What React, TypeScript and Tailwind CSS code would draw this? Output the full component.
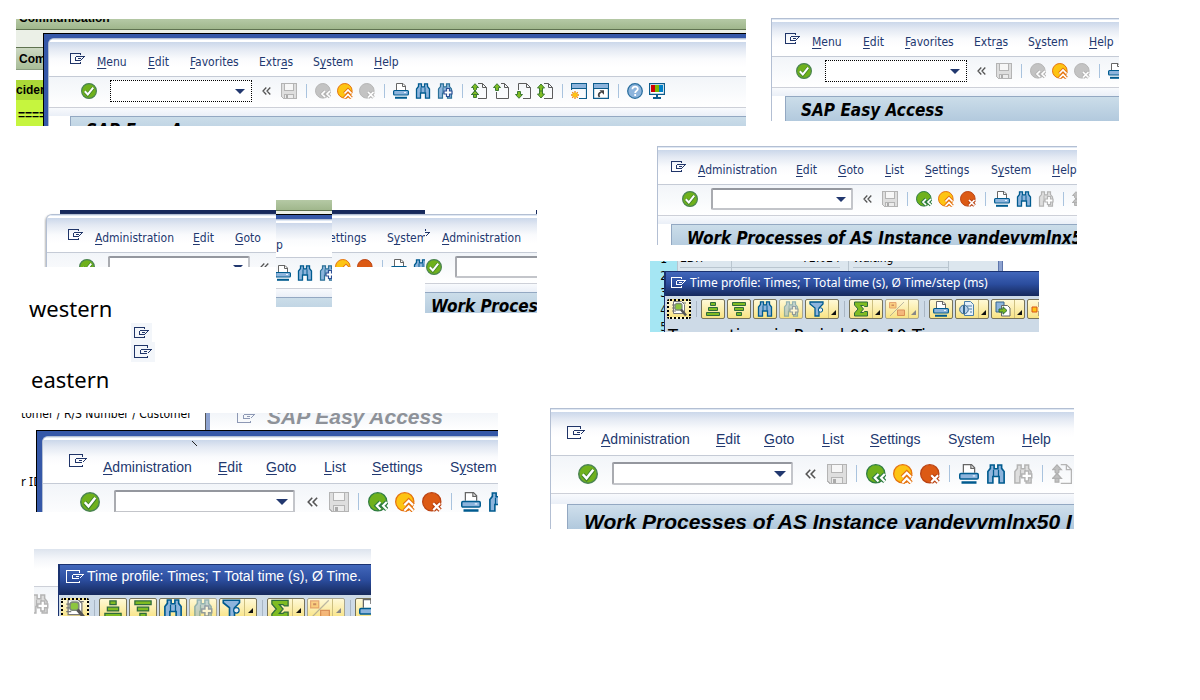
import React, { ReactNode } from "react";

type IconProps = { s?: number; off?: boolean };

const svgBase = (s: number) => ({ width: s, height: s, viewBox: "0 0 16 16", fill: "none", "aria-hidden": true });

function Hand({ big, color = "#1f3468" }: { big?: boolean; color?: string }) {
  return big ? (
    <svg className="shrink-0" width={18} height={14} viewBox="0 0 18 14" fill="none" stroke={color} aria-hidden shapeRendering="crispEdges">
      <path d="M13.500 2.500v-2H.5v12h13v-2M6.500 4.500h11M6.500 4.500v4h6M10 6.500h3M17 5l-3 3" />
    </svg>
  ) : (
    <svg className="shrink-0" width={15} height={11} viewBox="0 0 15 11" fill="none" stroke={color} aria-hidden shapeRendering="crispEdges">
      <path d="M10.500 2V.5H.5v10h10V9M5.500 3.500h9M5.500 3.500v4h5M8 5.500h3M14 4l-3 3" />
    </svg>
  );
}

const Check = ({ s = 16 }: IconProps) => (
  <svg {...svgBase(s)}>
    <circle cx="8" cy="8" r="7.400" fill="#6fb11c" stroke="#4a8451" strokeWidth="1.200" />
    <path d="M3.800 8.400l3 3.300 5.400-7" stroke="#3f7f2a" strokeWidth="3.400" />
    <path d="M3.800 8.200l3 3.200 5.400-6.800" stroke="#fff" strokeWidth="2" />
  </svg>
);

const Save = ({ s = 16 }: IconProps) => (
  <svg {...svgBase(s)} shapeRendering="crispEdges">
    <path d="M.5.5h15v15H2.500l-2-2z" fill="#dedede" stroke="#b4b4b4" />
    <path d="M3.500.5h9v6.500h-9z" fill="#f7f7f7" stroke="#b4b4b4" />
    <path d="M3.500 15.500v-4.500h9v4.500z" fill="#ececec" stroke="#b4b4b4" />
    <path d="M5 12h2v3H5z" fill="#aaa" />
  </svg>
);

function Round({ s, fill, edge, d }: { s: number; fill: string; edge: string; d: string }) {
  return (
    <svg {...svgBase(s)}>
      <circle cx="7.800" cy="7.800" r="7.300" fill={fill} stroke={edge} />
      <path d={d} stroke={edge} strokeWidth="3.600" />
      <path d={d} stroke="#fff" strokeWidth="1.700" />
    </svg>
  );
}
const Back = ({ s = 16, off }: IconProps) => (
  <Round s={s} fill={off ? "#c3c3c3" : "#6fb11c"} edge={off ? "#b5b5b5" : "#2f7d41"} d="M10 8L7 11l3 3M15 8l-3 3 3 3" />
);
const Exit = ({ s = 16 }: IconProps) => (
  <Round s={s} fill="#fdc413" edge="#e5730f" d="M7.500 10.500l3.500-3.500 3.500 3.500M7.500 15l3.500-3.500 3.500 3.500" />
);
const Cancel = ({ s = 16, off }: IconProps) => (
  <Round s={s} fill={off ? "#c3c3c3" : "#dc5a14"} edge={off ? "#b5b5b5" : "#bb4312"} d="M9 9l5.500 5.500M14.500 9l-5.500 5.500" />
);

const Print = ({ s = 16 }: IconProps) => (
  <svg {...svgBase(s)}>
    <path d="M3.500 7V.500h6.500l2.500 2.500v4" fill="#fff" stroke="#666" />
    <path d="M9.500.5v3h3" stroke="#666" />
    <rect x=".6" y="7.500" width="14.800" height="4.500" rx="1" fill="#8db4dc" stroke="#005b8f" strokeWidth="1.200" />
    <path d="M2 14.800h12" stroke="#005b8f" strokeWidth="2" />
    <path d="M11 9.500h2" stroke="#e9f3ff" />
  </svg>
);

const BINO = "M1.500 15.200V6l2-2.500V.8h3v3h3v-3h3v2.700l2 2.500v9.200h-4V10h-5v5.200z";
const Find = ({ s = 16 }: IconProps) => (
  <svg {...svgBase(s)}>
    <path d={BINO} fill="#8db4dc" stroke="#005b8f" strokeWidth="1.300" />
    <path d="M6 4.500v5M10 4.500v5" stroke="#005b8f" />
  </svg>
);
const FindNext = ({ s = 16, off }: IconProps) => (
  <svg {...svgBase(s)}>
    <path d={BINO} fill={off ? "#dedede" : "#8db4dc"} stroke={off ? "#b4b4b4" : "#2c7298"} strokeWidth="1.200" />
    <path d="M6 4.500v5M10 4.500v5" stroke={off ? "#b4b4b4" : "#2c7298"} />
    <path d="M9.500 5.500h3v2.500h2.500v3h-2.500v2.500h-3V11H7V8h2.500z" fill="#fff" stroke={off ? "#b4b4b4" : "#2c4f95"} strokeWidth="1.200" />
  </svg>
);

const UP = "M4 .7L7.500 4.500H5.500v3h-3v-3H.5z";
const DOWN = "M4 15.300L.5 11.500h2v-3h3v3h2z";
function Page({ s = 16, off, kind }: IconProps & { kind: "first" | "prev" | "next" | "last" }) {
  const g = off ? "#c0c0c0" : "#7fbc22";
  const e = off ? "#b0b0b0" : "#3c7a32";
  const line = off ? "#b4b4b4" : "#5c5c5c";
  return (
    <svg {...svgBase(s)}>
      {kind === "prev" && <path d="M8 .5h3.500l4 4v11h-12V9" stroke={line} />}
      {kind === "next" && <path d="M3.500 7V.5h8l4 4v11H8" stroke={line} />}
      {(kind === "first" || kind === "last") && <path d="M7 .5h4.500l4 4v11H7" stroke={line} />}
      <path d="M11.500.5v4h4" stroke={line} />
      {kind === "prev" && <path d={UP} fill={g} stroke={e} />}
      {kind === "next" && <path d={DOWN} fill={g} stroke={e} />}
      {kind === "first" && <path d="M4 .7L7.500 4.500H5.500V6.500L4 8 7.500 11.500H5.500v3h-3v-3H.5L4 8 2.500 6.500v-2H.5zM4 7.500l3.500 4H.5z" fill={g} stroke={e} />}
      {kind === "last" && <path d="M4 1L7.500 5h-2v6h2L4 15 .5 11h2V5h-2zM2 8h4" fill={g} stroke={e} />}
    </svg>
  );
}

const NewWin = () => (
  <svg {...svgBase(16)}>
    <path d="M.5 7V.5h15v15H8" stroke="#0d5c8c" strokeWidth="1.200" />
    <path d="M1 1h14v4H1z" fill="#8db4dc" />
    <path d="M1 5.500h14" stroke="#0d5c8c" />
    <path d="M4 8v8M0 12h8M1.200 9.200l5.600 5.600M6.800 9.200l-5.600 5.600" stroke="#ef8a10" strokeWidth="1.300" />
    <circle cx="4" cy="12" r="2.300" fill="#fdc413" />
  </svg>
);
const Shortcut = () => (
  <svg {...svgBase(16)}>
    <path d="M.6.6h14.800v14.800H.6z" fill="#fff" stroke="#0d5c8c" strokeWidth="1.200" />
    <path d="M1 1h14v4H1z" fill="#8db4dc" />
    <path d="M1 5.500h14" stroke="#0d5c8c" />
    <path d="M6.500 14c-1.500-2-1-4 2-5" stroke="#444" strokeWidth="1.800" />
    <path d="M6.500 7.200H11v4.500z" fill="#444" />
  </svg>
);
const Help = () => (
  <svg {...svgBase(16)}>
    <circle cx="8" cy="8" r="7.300" fill="#8db4dc" stroke="#2a6f9f" strokeWidth="1.300" />
    <path d="M5.400 6.200c0-3.600 5.400-3.300 5.400-.3 0 1.900-2.600 2-2.600 4M8.200 11v2" stroke="#fff" strokeWidth="1.800" />
  </svg>
);
const Monitor = () => (
  <svg {...svgBase(16)}>
    <path d="M.6.6h14.800v10.800H.6z" fill="#fff" stroke="#0d5c8c" strokeWidth="1.200" />
    <path d="M2 2h4v7H2z" fill="#d00000" />
    <path d="M6 2h4v7H6z" fill="#7ab800" />
    <path d="M10 2h4v7h-4z" fill="#0080c8" />
    <path d="M8 11.500v3M4 15h8" stroke="#0d5c8c" strokeWidth="2" />
  </svg>
);

/* Grid toolbar icons */
const Detail = ({ s = 16 }: IconProps) => (
  <svg {...svgBase(s)}>
    <path d="M2.500.5h8l3 3v9h-11z" fill="#fff" stroke="#777" />
    <path d="M1 4h4M1 7h3M1 10h4M12 2h3" stroke="#777" />
    <rect x="4" y="2.500" width="7" height="6.500" rx="2" fill="#8cc63f" stroke="#7d8a78" strokeWidth="1.300" />
    <path d="M10 8.500l5 6" stroke="#555" strokeWidth="2.600" />
  </svg>
);
const SortUp = ({ s = 16 }: IconProps) => (
  <svg {...svgBase(s)} fill="#7fbc22" stroke="#2f6b3c">
    <path d="M5.500 1.500h5v3h-5zM3.500 6.500h9v3h-9zM1.500 11.500h13v3h-13z" />
  </svg>
);
const SortDown = ({ s = 16 }: IconProps) => (
  <svg {...svgBase(s)} fill="#7fbc22" stroke="#2f6b3c">
    <path d="M1.500 1.500h13v3h-13zM3.500 6.500h9v3h-9zM5.500 11.500h5v3h-5z" />
  </svg>
);
const Filter = ({ s = 16 }: IconProps) => (
  <svg {...svgBase(s)}>
    <path d="M1 1h13v2l-4 4v8H6V7L1 3z" fill="#8db4dc" stroke="#005b8f" strokeWidth="1.300" />
    <circle cx="11.500" cy="9" r="2.200" fill="#e8eef5" stroke="#005b8f" />
  </svg>
);
const Sum = ({ s = 16 }: IconProps) => (
  <svg {...svgBase(s)}>
    <path d="M1.500 1h13v4.500h-3l-1-1H7.500l3 3.500-3 3.500h3l1-1h3V15h-13v-3L5 8 1.500 4z" fill="#7fbc22" stroke="#2f6b3c" />
  </svg>
);
const Sub = ({ s = 16 }: IconProps) => (
  <svg {...svgBase(s)} opacity=".55">
    <path d="M1 15L15 1" stroke="#888" />
    <path d="M.5 1.500h6.500v5.500H.5z" fill="#f7b04a" stroke="#d0662c" />
    <path d="M2.500 4.200h2.500M10.500 11.700h3" stroke="#a33a10" strokeWidth="1.500" />
    <path d="M8.500 9h7v5.500h-7z" fill="#ee8f5f" stroke="#c04a20" />
  </svg>
);
const Views = ({ s = 16 }: IconProps) => (
  <svg {...svgBase(s)}>
    <path d="M5.500.5h6l3 3v11h-9z" fill="#e6f0fa" stroke="#4b7fa8" />
    <path d="M8 5h5M10 8h3M11 11h2" stroke="#4b7fa8" />
    <circle cx="5" cy="8.500" r="4.300" fill="#b8d2ec" stroke="#34658e" />
    <path d="M5 4.500v8" stroke="#34658e" strokeWidth="2" />
  </svg>
);
const Export = ({ s = 16 }: IconProps) => (
  <svg {...svgBase(s)}>
    <path d="M1 1h8v10H1z" fill="#8db4dc" stroke="#34658e" />
    <path d="M6.500 4.500h6l2.500 2.500v8H6.500z" fill="#fff" stroke="#666" />
    <path d="M4 8h4V5.800l4 3.700-4 3.700V11H4z" fill="#7fbc22" stroke="#2f6b3c" />
  </svg>
);
const Layout = ({ s = 16 }: IconProps) => (
  <svg {...svgBase(s)}>
    <path d="M1 6h5v5H1z" fill="#fdc413" stroke="#d9531a" />
    <path d="M8 1h7v5H8zM8 10h7v5H8z" fill="#fff" stroke="#666" />
  </svg>
);

/* Window parts */
const BLUE_TEXT = "text-[#22386f]";
const WEST = "font-['DejaVu_Sans_Condensed','DejaVu_Sans',sans-serif]";
const NOTO = "font-['Noto_Sans',sans-serif]";
const EAST = "font-['Liberation_Sans',sans-serif]";

const Sep = ({ big }: { big?: boolean }) => (
  <span className={big ? "flex w-[5px] shrink-0 justify-center" : "flex w-[6px] shrink-0 justify-center"}>
    <span className={big ? "h-[17px] w-px bg-[#a9c3de]" : "h-[14px] w-px bg-[#a9c3de]"} />
  </span>
);

const Tool = ({ name, children }: { name: string; children: ReactNode }) => (
  <button type="button" aria-label={name} className="shrink-0">
    {children}
  </button>
);

function Menu({ items, cols, big }: { items: string[]; cols: string; big?: boolean }) {
  return (
    <nav className={`grid shrink-0 ${cols} ${BLUE_TEXT} ${big ? `${EAST} text-[14px] leading-[18px]` : `${WEST} text-[12px] leading-[16px]`}`}>
      {items.map((it) => {
        const i = it.indexOf("_");
        return (
          <button key={it} type="button" className="whitespace-nowrap text-left">
            {i < 0 ? it : (
              <>
                {it.slice(0, i)}
                <u className="underline-offset-2">{it[i + 1]}</u>
                {it.slice(i + 2)}
              </>
            )}
          </button>
        );
      })}
    </nav>
  );
}

function Command({ big, dotted }: { big?: boolean; dotted?: boolean }) {
  const edge = dotted ? "border border-dotted border-black pr-[6px]" : "rounded-[2px] border-2 border-[#c3c5ca] border-t-[#94979e] border-l-[#a9abb0] pr-[5px]";
  return (
    <div className={`flex shrink-0 items-center bg-white ${edge} ${big ? "ml-[7px] h-[23px] w-[181px]" : "ml-[7px] h-[22px] w-[142px]"}`}>
      <input aria-label="Command" className="h-full w-0 flex-1 px-1 text-[12px] outline-none" />
      <svg width={big ? 12 : 10} height={big ? 6 : 5} viewBox="0 0 10 5" fill="#22386f" aria-hidden>
        <path d="M0 0h10L5 5z" />
      </svg>
    </div>
  );
}

const Collapse = ({ big }: { big?: boolean }) => (
  <button type="button" aria-label="Collapse" className={big ? "flex w-[20px] shrink-0 justify-center" : "flex w-[17px] shrink-0 justify-center"}>
    <svg width={big ? 11 : 9} height={big ? 10 : 8} viewBox="0 0 9 8" fill="none" stroke="#555" strokeWidth="1.300" aria-hidden>
      <path d="M4.300.5L1 4l3.300 3.500M8.300.5L5 4l3.300 3.500" />
    </svg>
  </button>
);

function NavTools({ big, off }: { big?: boolean; off?: boolean }) {
  const s = big ? 20 : 16;
  return (
    <>
      <Tool name="Enter"><Check s={s} /></Tool>
      <Command big={big} dotted={off} />
      <Collapse big={big} />
      <Tool name="Save"><Save s={s} /></Tool>
      <Sep big={big} />
      <Tool name="Back"><Back s={s} off={off} /></Tool>
      <Tool name="Exit"><Exit s={s} /></Tool>
      <Tool name="Cancel"><Cancel s={s} off={off} /></Tool>
      <Sep big={big} />
      <Tool name="Print"><Print s={s} /></Tool>
      <Tool name="Find"><Find s={s} /></Tool>
    </>
  );
}

type FrameProps = {
  big?: boolean;
  frame?: string;
  pad?: string;
  menu: ReactNode;
  tools: ReactNode;
  title?: ReactNode;
  indent?: string;
};
function Frame({ big, frame = "border-l border-t border-[#b3bfd3]", pad = "", menu, tools, title, indent = "" }: FrameProps) {
  return (
    <section className={`flex shrink-0 flex-col overflow-hidden bg-white ${frame}`}>
      <div className={`border-b border-[#c5cbd6] bg-[linear-gradient(#dfe8f4_0px,#dfe8f4_1px,#fff_1px,#fff_3px,#cbd7ea_3px,#e3e9f3_10px,#fafbfd_20px,#fff_28px)] ${pad}`}>
        <div className={big ? "flex h-[46px] gap-[16px] pl-[16px] pt-[17px]" : "flex h-[37px] gap-[12px] pl-[13px] pt-[14px]"}>{menu}</div>
      </div>
      <div className={`border-b border-[#cdd0d8] bg-gradient-to-b from-[#f2f5f9] to-white ${pad}`}>
        <div className={big ? "flex h-[37px] items-center gap-[7px] pb-[2px] pl-[27px]" : "flex h-[30px] items-center gap-[6px] pb-[2px] pl-[24px]"}>{tools}</div>
      </div>
      <div className={`bg-gradient-to-b from-[#f8fafd] to-[#eaeff7] ${pad} ${big ? "h-[10px]" : "h-[8px]"}`} />
      <div className={`${pad} ${indent || (big ? "pl-[16px]" : "pl-[13px]")}`}>
        <div
          className={
            big
              ? `h-[36px] border-l border-t border-[#93a8c2] bg-gradient-to-b from-[#cfdfec] to-[#a3bed6] pl-[16px] pt-[5px] text-[21px] leading-[24px] font-bold italic whitespace-nowrap ${EAST}`
              : `h-[34px] border-l border-t border-[#93a8c2] bg-gradient-to-b from-[#cbdde9] to-[#a9c2d9] pl-[15px] pt-[3px] text-[17px] leading-[20px] font-bold italic whitespace-nowrap ${WEST}`
          }
        >
          {title}
        </div>
      </div>
    </section>
  );
}

const BASIC = ["_Menu", "_Edit", "_Favorites", "Extr_as", "S_ystem", "_Help"];
const BASIC_COLS = "grid-cols-[51px_42px_69px_54px_61px_40px]";
const ADMIN = ["_Administration", "_Edit", "_Goto", "_List", "_Settings", "S_ystem", "_Help"];
const ADMIN_COLS = "grid-cols-[98px_42px_47px_40px_66px_61px_40px]";
const ADMIN_COLS_BIG = "grid-cols-[115px_48px_58px_48px_78px_74px_50px]";

const MenuRow = ({ items, cols, big }: { items: string[]; cols: string; big?: boolean }) => (
  <>
    <Hand big={big} />
    <div className={big ? "pt-[4px]" : "pt-px"}><Menu items={items} cols={cols} big={big} /></div>
  </>
);

/* Yellow grid toolbar */
function Key({ name, icon, big, drop, focus, off }: { name: string; icon: ReactNode; big?: boolean; drop?: boolean; focus?: boolean; off?: boolean }) {
  const size = big ? (drop ? "h-[21px] w-[38px]" : "h-[21px] w-[28px]") : drop ? "h-[20px] w-[34px]" : "h-[20px] w-[24px]";
  return (
    <button
      type="button"
      aria-label={name}
      className={`flex shrink-0 items-center overflow-hidden rounded-[2px] bg-gradient-to-b from-[#fff9d6] to-[#f8e383] ${size} ${focus ? "border-2 border-dotted border-black" : off ? "border border-[#a9a68f]" : "border border-[#77735a]"}`}
    >
      <span className="flex flex-1 justify-center">{icon}</span>
      {drop && (
        <span className={`flex h-full items-end border-l border-[#cdbf80] ${big ? "px-[3px] pb-[5px]" : "px-[2px] pb-[3px]"}`}>
          <svg width="5" height="5" viewBox="0 0 5 5" fill={off ? "#888" : "#111"} aria-hidden><path d="M5 0v5H0z" /></svg>
        </span>
      )}
    </button>
  );
}
const KeySep = () => (
  <span className="flex w-[6px] shrink-0 justify-center pt-[2px]"><span className="h-[16px] w-px bg-[#a9b6c4]" /></span>
);

function GridKeys({ big }: { big?: boolean }) {
  const s = big ? 20 : 16;
  return (
    <div className={`flex items-start gap-[2px] bg-[#cddae7] pl-[2px] pt-[3px] ${big ? "h-[30px]" : "h-[28px]"}`}>
      <Key big={big} focus name="Details" icon={<Detail s={s} />} />
      <KeySep />
      <Key big={big} name="Sort ascending" icon={<SortUp s={s} />} />
      <Key big={big} name="Sort descending" icon={<SortDown s={s} />} />
      <Key big={big} name="Find" icon={<Find s={s} />} />
      <Key big={big} off name="Find next" icon={<span className="opacity-50"><FindNext s={s} /></span>} />
      <Key big={big} drop name="Filter" icon={<Filter s={s} />} />
      <KeySep />
      <Key big={big} drop name="Total" icon={<Sum s={s} />} />
      <Key big={big} drop off name="Subtotal" icon={<Sub s={s} />} />
      <KeySep />
      <Key big={big} name="Print" icon={<Print s={s} />} />
      {!big && (
        <>
          <Key drop name="Views" icon={<Views />} />
          <Key drop name="Export" icon={<Export />} />
          <Key name="Layout" icon={<Layout />} />
        </>
      )}
    </div>
  );
}

const TITLE_BLUE = "border-l border-t border-[#1a3270] bg-gradient-to-b from-[#4267bb] via-[#2b4d9e] to-[#16295c] text-white whitespace-nowrap";
const BLUE_EDGE = "border-[#3558a8]";

export default function App() {
  return (
    <main className="relative min-h-screen w-full overflow-hidden bg-white text-black">
      {/* Easy Access over the incident form */}
      <div className="absolute left-[16px] top-[19px] h-[107px] w-[730px] overflow-hidden font-['Liberation_Sans',sans-serif] text-[12px] font-bold">
        <div className="h-[10px] overflow-hidden bg-gradient-to-b from-[#b5c9a5] to-[#a0b78c] pl-[3px]">
          <div className="-mt-[8px] leading-[14px]">Communication</div>
        </div>
        <div className="h-[19px] border-y border-[#5f7350] bg-[#ebf0e7]" />
        <div className="h-[22px] border-b border-[#8b9c80] bg-gradient-to-b from-[#ccd8c2] to-[#a8bd98] pl-[3px] leading-[23px]">Com</div>
        <div className="h-[10px]" />
        <div className="h-[20px] bg-[#abd837] leading-[20px]">ciden</div>
        <div className="h-[26px] bg-[#c6f53e] pl-[2px] leading-[30px]">=====</div>
        <div className="absolute inset-x-0 bottom-0 left-[27px] top-[14px] overflow-hidden border-l border-t border-black font-normal">
          <div className={`border-l-[4px] border-t-[4px] bg-[#3558a8] ${BLUE_EDGE}`}>
            <Frame
              frame="rounded-tl-[6px] border-l border-t border-[#b3bfd3]"
              pad="pl-[8px]"
              indent="ml-[13px]"
              menu={<MenuRow items={BASIC} cols={BASIC_COLS} />}
              tools={
                <>
                  <NavTools off />
                  <Tool name="Find next"><FindNext /></Tool>
                  <Sep />
                  <Tool name="First page"><Page kind="first" /></Tool>
                  <Tool name="Previous page"><Page kind="prev" /></Tool>
                  <Tool name="Next page"><Page kind="next" /></Tool>
                  <Tool name="Last page"><Page kind="last" /></Tool>
                  <Sep />
                  <Tool name="New session"><NewWin /></Tool>
                  <Tool name="Create shortcut"><Shortcut /></Tool>
                  <Sep />
                  <Tool name="Help"><Help /></Tool>
                  <Tool name="Customize layout"><Monitor /></Tool>
                </>
              }
              title="SAP Easy Access"
            />
          </div>
        </div>
      </div>

      {/* Easy Access */}
      <div className="absolute left-[771px] top-[18px] h-[103px] w-[348px] overflow-hidden">
        <Frame menu={<MenuRow items={BASIC} cols={BASIC_COLS} />} tools={<NavTools off />} title="SAP Easy Access" />
      </div>

      {/* Work processes */}
      <div className="absolute left-[657px] top-[146px] h-[99px] w-[420px] overflow-hidden">
        <Frame
          menu={<MenuRow items={ADMIN} cols={ADMIN_COLS} />}
          tools={
            <>
              <NavTools />
              <Tool name="Find next"><FindNext off /></Tool>
              <Sep />
              <Tool name="First page"><Page kind="first" off /></Tool>
            </>
          }
          title="Work Processes of AS Instance vandevvmlnx50"
        />
      </div>

      {/* Composite of overlapping fragments */}
      <div className="absolute left-[44px] top-[210px] h-[57px] w-[381px] overflow-hidden">
        <div className="ml-[16px] h-[4px] bg-[#16295c]" />
        <div className="ml-[2px]">
          <Frame
            frame="rounded-tl-[6px] border-l border-t border-[#b3bfd3] shadow-[-1px_1px_2px_#bbb]"
            pad="pl-[8px]"
            menu={<MenuRow items={["_Administration", "_Edit", "_Goto", "ettings", "S_ystem"]} cols="grid-cols-[98px_42px_94px_58px_61px]" />}
            tools={<NavTools />}
          />
        </div>
      </div>
      <div className="absolute left-[276px] top-[200px] flex h-[107px] w-[56px] flex-col overflow-hidden">
        <div className="h-[10px] shrink-0 bg-gradient-to-b from-[#b5c9a5] to-[#a0b78c]" />
        <div className="h-[4px] shrink-0 border-t border-[#5f7350] bg-[#ebf0e7]" />
        <div className="h-[5px] shrink-0 border-t border-black bg-[#3558a8]" />
        <Frame
          frame="border-t border-[#b3bfd3]"
          indent="-ml-px"
          menu={<div className={`-ml-[13px] pt-[3px] text-[12px] leading-[16px] ${WEST} ${BLUE_TEXT}`}>p</div>}
          tools={
            <div className="-ml-[25px] flex gap-[6px] pt-[2px]">
              <Tool name="Print"><Print /></Tool>
              <Tool name="Find"><Find /></Tool>
              <Tool name="Find next"><FindNext /></Tool>
            </div>
          }
        />
      </div>
      <div className="absolute left-[425px] top-[210px] h-[103px] w-[112px] overflow-hidden">
        <div className="ml-auto h-[4px] w-px bg-[#16295c]" />
        <Frame
          frame="border-t border-[#b3bfd3]"
          indent="-ml-[10px]"
          menu={
            <div className="-ml-[13px] flex gap-[12px]">
              <svg width="5" height="11" viewBox="10 0 5 11" fill="none" stroke="#1f3468" shapeRendering="crispEdges" aria-hidden>
                <path d="M10 3.500h4.500M14 4l-3 3M10.500 0v2" />
              </svg>
              <div className="pt-px"><Menu items={["_Administration"]} cols="grid-cols-[98px]" /></div>
            </div>
          }
          tools={
            <div className="-ml-[23px] flex items-center gap-[6px]">
              <Tool name="Enter"><Check /></Tool>
              <Command />
            </div>
          }
          title="Work Processes"
        />
      </div>

      {/* Time profile */}
      <div className="absolute left-[650px] top-[261px] h-[71px] w-[389px] overflow-hidden bg-[#dce6ee]">
        <div className={`grid h-[71px] grid-cols-[27px_54px_117px_100px_50px_5px_1fr] overflow-hidden text-[12px] leading-[17px] ${WEST}`}>
          <div className="bg-[#a5e6f3] pr-[10px] text-right">
            <div className="-mt-[10px] h-[17px]">1</div>
            <div className="h-[17px]">2</div>
            <div className="h-[17px]">3</div>
            <div className="h-[17px]">4</div>
            <div className="h-[17px]">5</div>
          </div>
          <div className="border-l border-[#b9c5cf] pl-[2px]"><div className="-mt-[11px] h-[18px] border-b border-[#b9c5cf]">EDIT</div></div>
          <div className="border-l border-[#b9c5cf] pr-[8px] text-right"><div className="-mt-[11px] h-[18px] border-b border-[#b9c5cf]">72.024</div></div>
          <div className="border-l border-[#b9c5cf] pl-[4px]"><div className="-mt-[11px] h-[18px] border-b border-[#b9c5cf]">Waiting</div></div>
          <div className="border-l border-[#b9c5cf]" />
          <div className="border-x border-[#5d75ab] bg-[#8ea3d0]" />
          <div className="bg-white" />
        </div>
        <div className="absolute bottom-0 left-[14px] right-0 top-[10px] overflow-hidden border-l border-[#1a3270] bg-[#cddae7]">
          <div className={`flex h-[25px] items-start gap-[4px] pl-[5px] pt-[3px] text-[12px] leading-[16px] ${TITLE_BLUE} ${NOTO}`}>
            <div className="pt-[2px]"><Hand color="#fff" /></div>
            <span>Time profile: Times; T Total time (s), Ø Time/step (ms)</span>
          </div>
          <GridKeys />
          <div className={`pl-[3px] pt-[2px] text-[18px] leading-[20px] whitespace-nowrap ${WEST}`}>Transactions in Period 00 - 10 Time</div>
        </div>
      </div>

      {/* Notes */}
      <p className={`absolute left-[29px] top-[293px] text-[22px] leading-[30px] ${NOTO}`}>western</p>
      <div className="absolute left-[131px] top-[323px] flex flex-col items-start">
        <div className="bg-[#f3f6fa] px-[3px] py-[4px]"><Hand /></div>
        <div className="bg-[#f3f6fa] px-[3px] py-[3px]"><Hand big /></div>
      </div>
      <p className={`absolute left-[31px] top-[364px] text-[22px] leading-[30px] ${NOTO}`}>eastern</p>

      {/* Eastern work processes over the request form */}
      <div className="absolute left-[21px] top-[413px] h-[99px] w-[477px] overflow-hidden">
        <div className="flex h-[17px]">
          <div className={`w-[184px] overflow-hidden text-[12px] leading-[16px] whitespace-nowrap ${WEST}`}>
            <div className="-mt-[7px]">tomer / R/S Number / Customer</div>
          </div>
          <div className="w-[5px] border-l border-[#555] bg-[#8ea3d0]" />
          <div className="flex flex-1 gap-[12px] overflow-hidden bg-gradient-to-b from-[#f2f5f9] to-white pl-[27px]">
            <div className="-mt-[3px]"><Hand big color="#8d98b4" /></div>
            <div className={`-mt-[8px] text-[21px] leading-[24px] font-bold italic text-[#8e9299] whitespace-nowrap ${EAST}`}>SAP Easy Access</div>
          </div>
        </div>
        <div className={`pt-[44px] text-[12px] leading-[16px] ${NOTO}`}>r ID</div>
        <div className="absolute bottom-0 left-[15px] right-0 top-[17px] overflow-hidden border-l border-t border-black">
          <div className={`border-l-[5px] border-t-[5px] bg-[#3558a8] ${BLUE_EDGE}`}>
            <Frame
              big
              frame="rounded-tl-[6px] border-l border-t border-[#b3bfd3]"
              pad="pl-[10px]"
              menu={<MenuRow big items={ADMIN.slice(0, 6)} cols="grid-cols-[115px_48px_58px_48px_78px_74px]" />}
              tools={<NavTools big />}
            />
          </div>
          <svg className="absolute left-[155px] top-[10px]" width="6" height="6" viewBox="0 0 6 6" stroke="#222" aria-hidden><path d="M0 0l5 5" /></svg>
        </div>
      </div>

      {/* Eastern work processes */}
      <div className="absolute left-[550px] top-[408px] h-[121px] w-[524px] overflow-hidden">
        <Frame
          big
          menu={<MenuRow big items={ADMIN} cols={ADMIN_COLS_BIG} />}
          tools={
            <>
              <NavTools big />
              <Tool name="Find next"><FindNext s={20} off /></Tool>
              <Sep big />
              <Tool name="First page"><Page s={20} kind="first" off /></Tool>
            </>
          }
          title="Work Processes of AS Instance vandevvmlnx50 I"
        />
      </div>

      {/* Eastern time profile */}
      <div className="absolute left-[34px] top-[549px] h-[67px] w-[337px] overflow-hidden">
        <div className="h-[38px] border-b border-[#cdd0d8] bg-[linear-gradient(#dde4ee_0px,#f4f6fa_10px,#fff_20px)]" />
        <div className="h-[29px] bg-gradient-to-b from-[#f2f5f9] to-white pt-[7px]">
          <div className="-ml-[5px]"><FindNext s={20} off /></div>
        </div>
        <div className="absolute bottom-0 left-[24px] right-0 top-[15px] overflow-hidden border-l border-[#1a3270] bg-[#cddae7]">
          <div className={`flex h-[31px] items-start gap-[3px] pl-[6px] pt-[2px] text-[14px] leading-[18px] ${TITLE_BLUE} ${EAST}`}>
            <div className="pt-[3px]"><Hand big color="#fff" /></div>
            <span>Time profile: Times; T Total time (s), Ø Time.</span>
          </div>
          <GridKeys big />
        </div>
      </div>
    </main>
  );
}
